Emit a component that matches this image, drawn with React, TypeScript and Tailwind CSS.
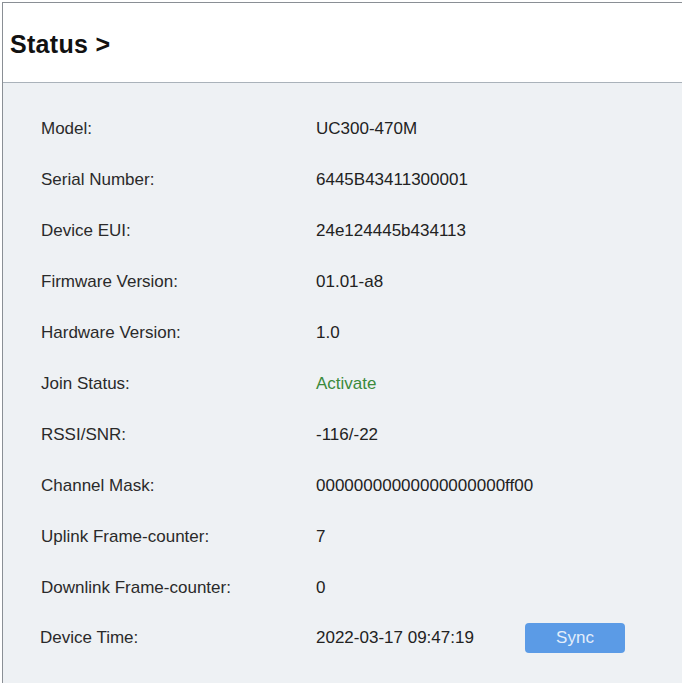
type StatusRow = { label: string; value: string; tone?: 'ok' }

const rows: StatusRow[] = [
  { label: 'Model:', value: 'UC300-470M' },
  { label: 'Serial Number:', value: '6445B43411300001' },
  { label: 'Device EUI:', value: '24e124445b434113' },
  { label: 'Firmware Version:', value: '01.01-a8' },
  { label: 'Hardware Version:', value: '1.0' },
  { label: 'Join Status:', value: 'Activate', tone: 'ok' },
  { label: 'RSSI/SNR:', value: '-116/-22' },
  { label: 'Channel Mask:', value: '00000000000000000000ff00' },
  { label: 'Uplink Frame-counter:', value: '7' },
  { label: 'Downlink Frame-counter:', value: '0' },
]

export default function App() {
  return (
    <div className="w-[688px] h-[683px] bg-white overflow-hidden font-['Liberation_Sans',Arial,sans-serif]">
      <div className="ml-[2px] mt-[2px] w-[680px] h-[681px] flex flex-col border-l border-t border-[#8a8f95] bg-[#eef1f4]">
        {/* header */}
        <div className="h-[80px] shrink-0 bg-white border-b border-[#aab2ba] flex items-center pl-[7px] pt-[4px]">
          <h1 className="text-[25px] font-bold text-[#111] tracking-[0.3px]">Status &gt;</h1>
        </div>

        <div className="pt-[20px] pl-[38px] text-[17px] text-[#2a2a2a]">
          {rows.map((r) => (
            <div key={r.label} className="h-[51px] flex items-center">
              <span className="w-[275px] shrink-0">{r.label}</span>
              <span className={r.tone === 'ok' ? 'text-[#3b8a3b]' : 'text-[#222]'}>{r.value}</span>
            </div>
          ))}
          <div className="h-[49px] flex items-center -ml-[1px]">
            <span className="w-[276px] shrink-0">Device Time:</span>
            <span className="w-[209px] shrink-0 text-[#222]">2022-03-17 09:47:19</span>
            <button className="w-[100px] h-[30px] rounded-[4px] bg-[#5b9be6] text-[#e3eefb] text-[17px]">
              Sync
            </button>
          </div>
        </div>
      </div>
    </div>
  )
}
